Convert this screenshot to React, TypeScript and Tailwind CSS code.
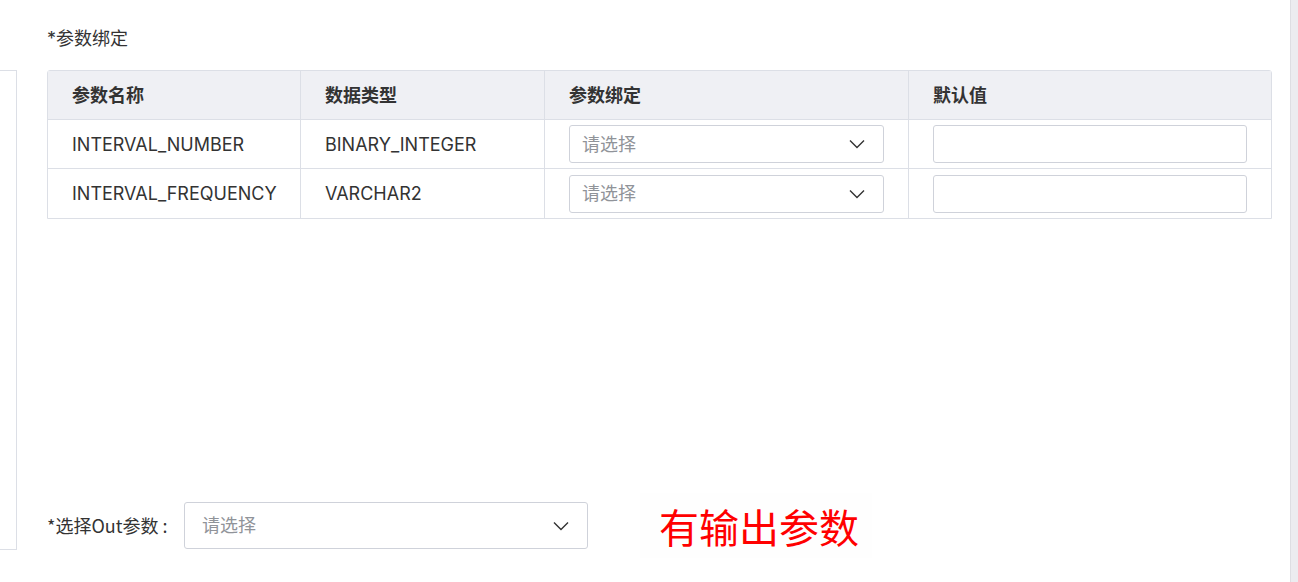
const rows = [
    { name: "INTERVAL_NUMBER", type: "BINARY_INTEGER" },
    { name: "INTERVAL_FREQUENCY", type: "VARCHAR2" },
];

function Select({ className = "" }: { className?: string }) {
    return (
        <div className={`flex items-center justify-between border border-[#cfd2da] rounded-[3px] bg-white ${className}`}>
            <span className="text-[#909399]">请选择</span>
            <svg width="16" height="10" viewBox="0 0 16 10" fill="none" className="shrink-0">
                <path d="M1 1.5 L8 8.5 L15 1.5" stroke="#333" strokeWidth="1.4" />
            </svg>
        </div>
    );
}

export default function App() {
    return (
        <div
            className="relative w-[1298px] h-[582px] bg-white overflow-hidden text-[18px] text-[#333]"
            style={{ fontFamily: 'Inter, "Noto Sans CJK SC", sans-serif' }}
        >
            {/* right scroll strip */}
            <div className="absolute right-0 top-0 h-full w-[8px] bg-[#ececf0] border-l border-[#dedee3]" />

            <div className="flex h-full">
                {/* left panel edge */}
                <div className="w-[17px] shrink-0 pt-[70px]">
                    <div className="h-[480px] border-t border-r border-b border-[#dcdfe6]" />
                </div>

                <div className="flex-1 pl-[30px] flex flex-col">
                    <div className="h-[70px] flex items-center pt-[8px] leading-none">*参数绑定</div>

                    <div className="w-[1225px] border border-[#dcdfe6] rounded-t-[3px]">
                        <div className="grid grid-cols-[253px_244px_364px_362px] bg-[#eff0f4] h-[49px] font-bold border-b border-[#dcdfe6]">
                            <div className="flex items-center pl-[24px] border-r border-[#dcdfe6]">参数名称</div>
                            <div className="flex items-center pl-[24px] border-r border-[#dcdfe6]">数据类型</div>
                            <div className="flex items-center pl-[24px] border-r border-[#dcdfe6]">参数绑定</div>
                            <div className="flex items-center pl-[24px]">默认值</div>
                        </div>
                        {rows.map((r, i) => (
                            <div
                                key={r.name}
                                className={`grid grid-cols-[253px_244px_364px_362px] h-[49px] ${i === 0 ? "border-b border-[#dcdfe6]" : ""}`}
                            >
                                <div className="flex items-center pl-[24px] border-r border-[#dcdfe6]">{r.name}</div>
                                <div className="flex items-center pl-[24px] border-r border-[#dcdfe6]">{r.type}</div>
                                <div className="flex items-center px-[24px] border-r border-[#dcdfe6]">
                                    <Select className="w-full h-[38px] pl-[12px] pr-[18px]" />
                                </div>
                                <div className="flex items-center px-[24px]">
                                    <div className="w-full h-[38px] border border-[#cfd2da] rounded-[3px]" />
                                </div>
                            </div>
                        ))}
                    </div>

                    <div className="flex-1" />

                    <div className="flex items-center h-[47px] mb-[33px]">
                        <span
                            className="w-[137px] text-[#333]"
                            style={{ fontFamily: '"Noto Sans CJK SC", sans-serif' }}
                        >
                            *选择Out参数 :
                        </span>
                        <Select className="w-[404px] h-[47px] pl-[17px] pr-[18px]" />
                        <div className="ml-[52px] w-[232px] h-[65px] bg-[#fefefe] flex items-center pl-[19px]">
                            <span
                                className="text-[#ff0000] text-[40px] leading-none"
                                style={{ fontFamily: '"Noto Sans CJK SC", sans-serif' }}
                            >
                                有输出参数
                            </span>
                        </div>
                    </div>
                </div>
            </div>
        </div>
    );
}
